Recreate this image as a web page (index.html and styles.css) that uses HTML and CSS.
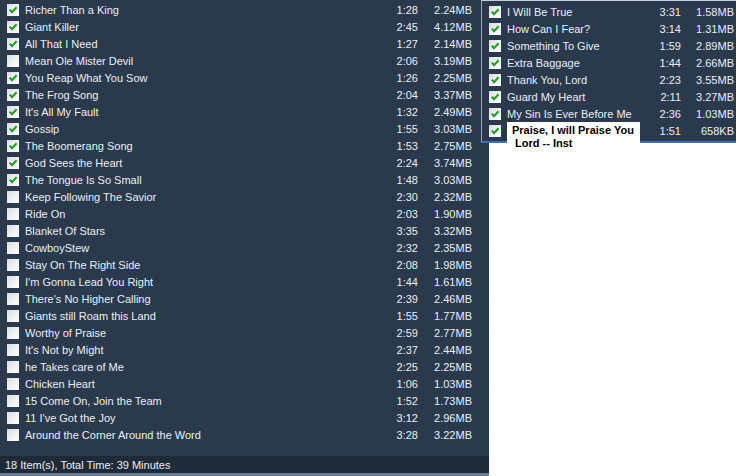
FILE: index.html
```html
<!DOCTYPE html>
<html lang="en">
  <head>
    <meta charset="UTF-8" />
    <title>Playlist</title>
    <link rel="stylesheet" href="styles.css">
  </head>
  <body>
    <div class="desktop">
      <div class="library">
        <div class="list" id="library-list"></div>
        <div class="status">18 Item(s), Total Time: 39 Minutes</div>
        <div class="strip"></div>
      </div>

      <div class="burn">
        <div class="list" id="burn-list"></div>
        <div class="edit-box">Praise, I will Praise You<br />&nbsp;Lord -- Inst</div>
      </div>
    </div>

    <script>
      // [title, time, size, checked]
      var library = [
        ["Richer Than a King", "1:28", "2.24MB", 1],
        ["Giant Killer", "2:45", "4.12MB", 1],
        ["All That I Need", "1:27", "2.14MB", 1],
        ["Mean Ole Mister Devil", "2:06", "3.19MB", 0],
        ["You Reap What You Sow", "1:26", "2.25MB", 1],
        ["The Frog Song", "2:04", "3.37MB", 1],
        ["It's All My Fault", "1:32", "2.49MB", 1],
        ["Gossip", "1:55", "3.03MB", 1],
        ["The Boomerang Song", "1:53", "2.75MB", 1],
        ["God Sees the Heart", "2:24", "3.74MB", 1],
        ["The Tongue Is So Small", "1:48", "3.03MB", 1],
        ["Keep Following The Savior", "2:30", "2.32MB", 0],
        ["Ride On", "2:03", "1.90MB", 0],
        ["Blanket Of Stars", "3:35", "3.32MB", 0],
        ["CowboyStew", "2:32", "2.35MB", 0],
        ["Stay On The Right Side", "2:08", "1.98MB", 0],
        ["I'm Gonna Lead You Right", "1:44", "1.61MB", 0],
        ["There's No Higher Calling", "2:39", "2.46MB", 0],
        ["Giants still Roam this Land", "1:55", "1.77MB", 0],
        ["Worthy of Praise", "2:59", "2.77MB", 0],
        ["It's Not by Might", "2:37", "2.44MB", 0],
        ["he Takes care of Me", "2:25", "2.25MB", 0],
        ["Chicken Heart", "1:06", "1.03MB", 0],
        ["15 Come On, Join the Team", "1:52", "1.73MB", 0],
        ["11 I've Got the Joy", "3:12", "2.96MB", 0],
        ["Around the Corner Around the Word", "3:28", "3.22MB", 0]
      ];

      var burn = [
        ["I Will Be True", "3:31", "1.58MB", 1],
        ["How Can I Fear?", "3:14", "1.31MB", 1],
        ["Something To Give", "1:59", "2.89MB", 1],
        ["Extra Baggage", "1:44", "2.66MB", 1],
        ["Thank You, Lord", "2:23", "3.55MB", 1],
        ["Guard My Heart", "2:11", "3.27MB", 1],
        ["My Sin Is Ever Before Me", "2:36", "1.03MB", 1],
        ["", "1:51", "658KB", 1]
      ];

      var tick =
        '<svg viewBox="0 0 12 12" width="12" height="12">' +
        '<path d="M2.8 5.6 L5 8.2 L9.6 3.2" fill="none" stroke="#1f9e22" stroke-width="2.1"/></svg>';

      function fill(id, rows) {
        var html = "";
        rows.forEach(function (r) {
          html +=
            '<div class="row">' +
            '<span class="check">' + (r[3] ? tick : "") + "</span>" +
            '<span class="title">' + r[0] + "</span>" +
            '<span class="time">' + r[1] + "</span>" +
            '<span class="size">' + r[2] + "</span>" +
            "</div>";
        });
        document.getElementById(id).innerHTML = html;
      }

      fill("library-list", library);
      fill("burn-list", burn);
    </script>
  </body>
</html>
```

FILE: styles.css
```css
body {
  margin: 0;
  background: #ffffff;
  font-family: "Liberation Sans", Arial, sans-serif;
  font-size: 11px;
}
.desktop {
  position: relative;
  width: 736px;
  height: 476px;
  overflow: hidden;
}
.library {
  width: 489px;
  height: 476px;
  display: flex;
  flex-direction: column;
  background: #2b394c;
  color: #eaeff5;
}
.library .list {
  flex: 1;
  padding: 1px 17px 0 7px;
}
.row {
  display: grid;
  grid-template-columns: 12px 1fr 50px 54px;
  align-items: center;
  height: 17px;
  white-space: nowrap;
}
.check {
  width: 12px;
  height: 12px;
  background: linear-gradient(135deg, #d8dce2 0%, #f2f3f6 60%, #ffffff 100%);
  display: flex;
}
.title {
  padding-left: 6px;
  overflow: hidden;
}
.time,
.size {
  text-align: right;
}
.status {
  height: 17px;
  line-height: 18px;
  padding-left: 5px;
  background: #1f2a38;
  color: #eaeff5;
}
.strip {
  height: 3px;
  background: #6b7b91;
}
.burn {
  position: absolute;
  left: 481px;
  top: 0;
  width: 254px;
  height: 140px;
  background: #2b394c;
  color: #eaeff5;
  border-top: 1px solid #c9ced6;
  border-left: 1px solid #9aa4b2;
  border-bottom: 2px solid #3f6db2;
}
.burn .list {
  padding: 2px 2px 0 7px;
}
.burn .row {
  grid-template-columns: 12px 1fr 40px 53px;
}
.edit-box {
  position: absolute;
  left: 25px;
  top: 121px;
  width: 128px;
  height: 27px;
  padding: 2px 0 0 5px;
  background: #ffffff;
  color: #000000;
  font-weight: bold;
  line-height: 13px;
  white-space: nowrap;
}
```
